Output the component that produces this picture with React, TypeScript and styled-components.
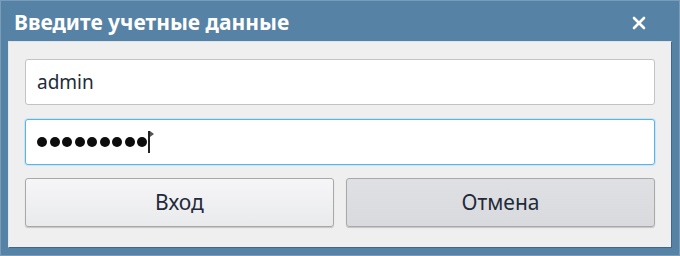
import React from "react";
import styled, { createGlobalStyle } from "styled-components";

const Global = createGlobalStyle`
  html, body { margin: 0; padding: 0; background: #5682a5; }
  body { font-family: "Noto Sans", "Open Sans", sans-serif; }
`;

const Window = styled.div`
  width: 680px;
  height: 256px;
  box-sizing: border-box;
  background: #5682a5;
  border: 1px solid #7b9cb9;
  display: flex;
  flex-direction: column;
`;

const TitleBar = styled.div`
  height: 40px;
  display: flex;
  align-items: center;
  justify-content: space-between;
  padding: 0 32px 0 13px;
  box-sizing: border-box;
`;

const Title = styled.div`
  color: #ffffff;
  font-weight: 700;
  font-size: 21px;
  padding-top: 1px;
`;

const Close = styled.button`
  width: 16px;
  height: 16px;
  padding: 0;
  border: none;
  background: transparent;
  display: flex;
  margin-top: 4px;
`;

const Panel = styled.div`
  margin: 0 7px 7px 7px;
  flex: 1;
  background: #efefef;
  border-top: 1px solid #dfe3e6;
  border-left: 1px solid #e3e6e9;
  border-right: 1px solid #3e6788;
  border-bottom: 1px solid #3e6788;
  box-sizing: border-box;
  padding: 17px 16px 20px 16px;
  display: flex;
  flex-direction: column;
`;

const Field = styled.div<{ $focused?: boolean; $gap?: number }>`
  height: 46px;
  box-sizing: border-box;
  margin-top: ${(p) => p.$gap ?? 0}px;
  background: #ffffff;
  border: 1px solid ${(p) => (p.$focused ? "#5cb3e6" : "#c3c3c3")};
  border-radius: 3px;
  box-shadow: ${(p) => (p.$focused ? "0 0 0 1px #c9e6f7" : "none")};
  display: flex;
  align-items: center;
  padding-left: 11px;
  font-size: 19px;
  color: #1f2a3a;
`;

const Dots = styled.span`
  display: flex;
  gap: 2.5px;
  align-items: center;
`;

const Dot = styled.span`
  width: 10px;
  height: 10px;
  border-radius: 50%;
  background: #0d0d0d;
`;

const Caret = styled.span`
  width: 2px;
  height: 22px;
  background: #222;
  margin-left: 1px;
  position: relative;
  &::after {
    content: "";
    position: absolute;
    left: 2px;
    top: 0;
    width: 0;
    height: 0;
    border-left: 4px solid #555;
    border-top: 3px solid transparent;
    border-bottom: 3px solid transparent;
  }
`;

const Buttons = styled.div`
  margin-top: 13px;
  display: grid;
  grid-template-columns: 1fr 1fr;
  gap: 12px;
`;

const Button = styled.button<{ $hover?: boolean }>`
  height: 49px;
  box-sizing: border-box;
  border: 1px solid #a9a9a9;
  border-radius: 3px;
  background: ${(p) =>
    p.$hover
      ? "linear-gradient(#dfe0e3, #d9dadd)"
      : "linear-gradient(#f6f6f8, #e9eaec)"};
  box-shadow: 0 1px 1px rgba(0, 0, 0, 0.18);
  font-family: "Noto Sans", "Open Sans", sans-serif;
  font-size: 21px;
  color: #1f2a3a;
  padding: 0 0 1px 0;
`;

export default function App() {
  return (
    <>
      <Global />
      <Window>
        <TitleBar>
          <Title>Введите учетные данные</Title>
          <Close aria-label="Закрыть">
            <svg width="16" height="16" viewBox="0 0 16 16">
              <path
                d="M3 3 L13 13 M13 3 L3 13"
                stroke="#ffffff"
                strokeWidth="2.6"
                strokeLinecap="round"
              />
            </svg>
          </Close>
        </TitleBar>
        <Panel>
          <Field>admin</Field>
          <Field $focused $gap={14}>
            <Dots>
              {Array.from({ length: 9 }).map((_, i) => (
                <Dot key={i} />
              ))}
            </Dots>
            <Caret />
          </Field>
          <Buttons>
            <Button>Вход</Button>
            <Button $hover>Отмена</Button>
          </Buttons>
        </Panel>
      </Window>
    </>
  );
}
